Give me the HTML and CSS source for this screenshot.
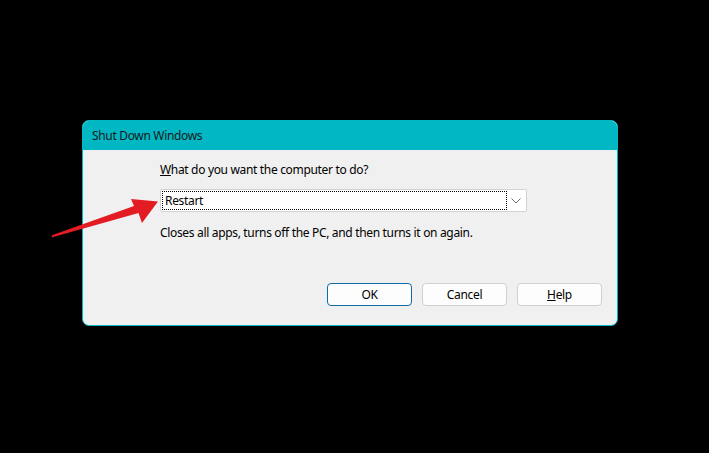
FILE: index.html
```html
<!DOCTYPE html>
<html>
<head>
<meta charset="utf-8">
<link rel="stylesheet" href="styles.css">
</head>
<body>
<div class="stage">
  <div class="dialog">
    <div class="titlebar">Shut Down Windows</div>
    <div class="content">
      <div class="label"><u>W</u>hat do you want the computer to do?</div>
      <div class="combo">
        <div class="combo-value"><span class="focus">Restart</span></div>
        <div class="combo-arrow">
          <svg width="10" height="6" viewBox="0 0 10 6"><path d="M0.5 0.5 L5 5 L9.5 0.5" fill="none" stroke="#707070" stroke-width="1"/></svg>
        </div>
      </div>
      <div class="desc">Closes all apps, turns off the PC, and then turns it on again.</div>
      <div class="buttons">
        <div class="btn default">OK</div>
        <div class="btn">Cancel</div>
        <div class="btn"><u>H</u>elp</div>
      </div>
    </div>
  </div>
  <svg class="arrow" width="709" height="453" viewBox="0 0 709 453">
    <path d="M51.5 237.5 L52.5 235 L134 206 L131 199 L158 201.5 L142 223 L138.5 213 Z" fill="#e31b22"/>
  </svg>
</div>
</body>
</html>
```
FILE: styles.css
```css
html, body {
  margin: 0;
  padding: 0;
  background: #000;
}
.stage {
  position: relative;
  width: 709px;
  height: 453px;
  padding: 120px 0 0 82px;
  box-sizing: border-box;
  font-family: "Noto Sans", "Open Sans", sans-serif;
  font-size: 12px;
  letter-spacing: -0.33px;
  color: #000;
}
.dialog {
  width: 536px;
  height: 206px;
  box-sizing: border-box;
  border: 1px solid #00b7c3;
  border-radius: 7px;
  background: #f0f0f0;
  overflow: hidden;
  display: flex;
  flex-direction: column;
}
.titlebar {
  height: 29px;
  background: #00b7c3;
  color: #1a1a1a;
  padding-left: 9px;
  display: flex;
  align-items: center;
  font-size: 12px;
}
.content {
  flex: 1;
  padding: 12px 15px 19px 77px;
  display: flex;
  flex-direction: column;
}
.label {
  line-height: 16px;
  height: 16px;
}
.combo {
  margin-top: 11px;
  width: 367px;
  height: 23px;
  box-sizing: border-box;
  border: 1px solid #d3d3d3;
  border-radius: 2px;
  background: #fff;
  display: flex;
  align-items: center;
  padding: 1px;
}
.combo-value {
  flex: 1;
  height: 19px;
  box-sizing: border-box;
  border: 1px dotted #000;
  display: flex;
  align-items: center;
  padding-left: 2px;
}
.combo-arrow {
  width: 18px;
  display: flex;
  align-items: center;
  justify-content: center;
}
.combo-arrow svg { display: block; }
.desc {
  margin-top: 13px;
  line-height: 16px;
  height: 16px;
}
.buttons {
  margin-top: auto;
  display: flex;
  justify-content: flex-end;
  gap: 10px;
}
.btn {
  width: 85px;
  height: 23px;
  box-sizing: border-box;
  border: 1px solid #d0d0d0;
  border-radius: 4px;
  background: #fdfdfd;
  display: flex;
  align-items: center;
  justify-content: center;
}
.btn.default {
  border-color: #0f6aa6;
}
.arrow {
  position: absolute;
  left: 0;
  top: 0;
  pointer-events: none;
}
```
